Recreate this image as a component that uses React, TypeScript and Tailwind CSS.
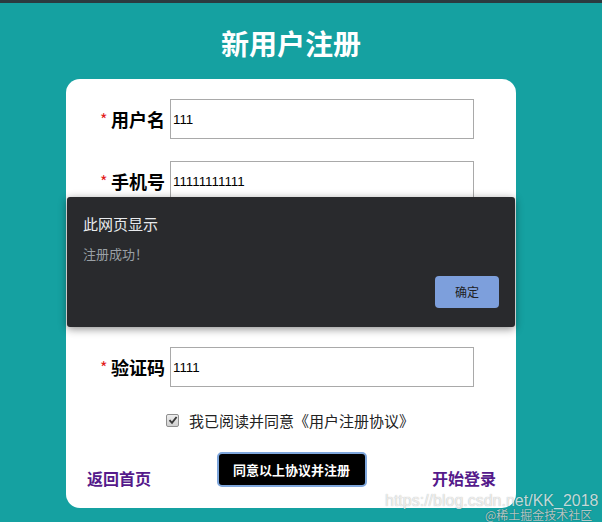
import React from 'react';

const CJK = '"Noto Sans CJK SC", "Liberation Sans", sans-serif';

// the middle two rows sit under the alert, so they are kept but not visible
const FIELDS = [
  { label: '用户名', value: '111', hidden: false },
  { label: '手机号', value: '11111111111', hidden: false },
  { label: '密码', value: '', hidden: true },
  { label: '确认密码', value: '', hidden: true },
  { label: '验证码', value: '1111', hidden: false },
];

const Field: React.FC<{ label: string; value: string; hidden: boolean }> = ({ label, value, hidden }) => (
  <div className={`flex items-center h-[40px] ${hidden ? 'invisible' : ''}`}>
    <span className="w-[11px] text-[16px] text-[#e21b1b] leading-none">*</span>
    <span className="w-[59px] text-[18px] font-bold text-black leading-none whitespace-nowrap">{label}</span>
    <input
      readOnly
      value={value}
      className="w-[304px] h-[40px] border border-[#a9a9a9] bg-white pl-[2px] text-[13.33px] text-black font-['Liberation_Sans',Arial,sans-serif] outline-none"
    />
  </div>
);

const App: React.FC = () => {
  return (
    <div className="relative w-[602px] h-[522px] overflow-hidden bg-[#15a1a1]" style={{ fontFamily: CJK }}>
      {/* Browser top edge */}
      <div className="h-[3px] bg-[#2b3b40]" />

      <div className="flex flex-col items-center w-[582px]">
        <h1 className="h-[76px] pt-[4px] flex items-center text-[28px] font-bold text-white">新用户注册</h1>

        {/* Card */}
        <div className="w-[450px] rounded-[14px] bg-white pt-[20px] pb-[20px]">
          <div className="flex flex-col gap-[22px] pl-[34px]">
            {FIELDS.map((f) => (
              <Field key={f.label} label={f.label} value={f.value} hidden={f.hidden} />
            ))}
          </div>

          <div className="mt-[23px] pl-[100px] flex items-center h-[20px]">
            <span className="w-[13px] h-[13px] rounded-[2px] border border-[#8f8f8f] bg-gradient-to-b from-[#eeeeee] to-[#d0d0d0] flex items-center justify-center">
              <svg width="10" height="10" viewBox="0 0 10 10">
                <path d="M1.5 5.2 L4 7.8 L8.6 2" fill="none" stroke="#3a3a3a" strokeWidth="1.9" />
              </svg>
            </span>
            <span className="ml-[10px] text-[15px] text-[#222] leading-none">我已阅读并同意《用户注册协议》</span>
          </div>

          <div className="mt-[22px] flex items-start justify-between pl-[21px] pr-[20px]">
            <a className="mt-[16px] text-[16px] leading-[20px] font-bold text-[#551a8b]">返回首页</a>
            <button className="w-[150px] h-[35px] rounded-[5px] bg-black border-2 border-[#7ea6dc] text-[13px] font-bold text-white">
              同意以上协议并注册
            </button>
            <a className="mt-[16px] text-[16px] leading-[20px] font-bold text-[#551a8b]">开始登录</a>
          </div>
        </div>
      </div>

      {/* Browser alert dialog */}
      <div className="absolute left-[67px] top-[197px] w-[448px] h-[130px] rounded-[3px] bg-[#292a2d] shadow-[0_2px_8px_rgba(0,0,0,0.45)] px-[16px] pt-[17px]">
        <div className="text-[15px] leading-[20px] text-[#e8eaed]">此网页显示</div>
        <div className="mt-[10px] text-[13px] leading-[20px] text-[#9aa0a6]">注册成功！</div>
        <div className="mt-[12px] flex justify-end">
          <button className="w-[64px] h-[32px] rounded-[4px] bg-[#7d9fdc] text-[12px] text-[#202124]">确定</button>
        </div>
      </div>

      {/* Watermarks */}
      <div className="absolute left-[385px] top-[491px] text-[16px] leading-[20px] text-white/75 [text-shadow:0_0_1px_rgba(0,0,0,0.35)] font-['Liberation_Sans',Arial,sans-serif] whitespace-nowrap">
        https://blog.csdn.net/KK_2018
      </div>
      <div className="absolute left-[485px] top-[508px] text-[12px] leading-[14px] text-white/70 [text-shadow:0_0_1px_rgba(0,0,0,0.6)] whitespace-nowrap">
        @稀土掘金技术社区
      </div>
    </div>
  );
};

export default App;
